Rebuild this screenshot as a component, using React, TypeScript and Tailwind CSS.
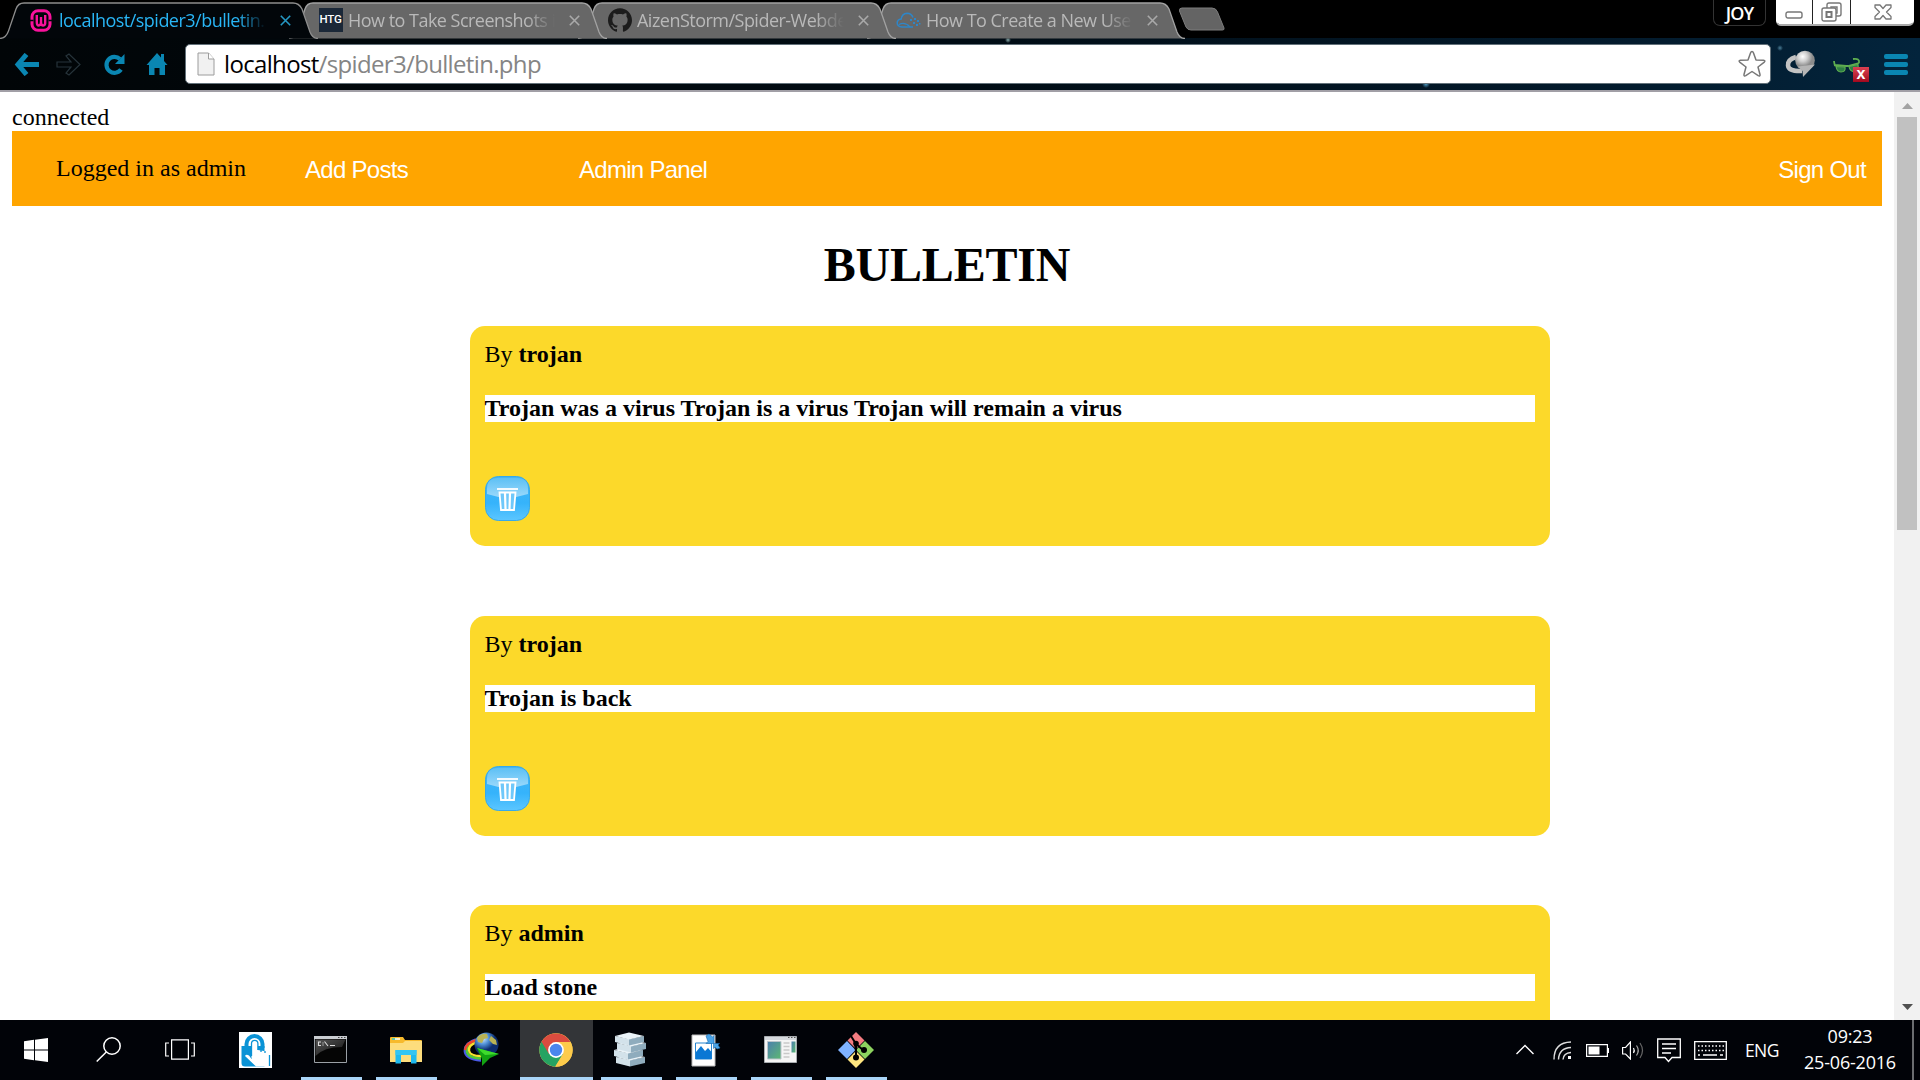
import type { ReactNode } from "react";
import { SiGithub } from "react-icons/si";

const UI = "font-['Open_Sans','Noto_Sans',sans-serif]";
const SERIF = "font-['Liberation_Serif','Times_New_Roman',serif]";
const ARIAL = "font-['Liberation_Sans',Arial,sans-serif]";

/* ---------- tab strip ---------- */

function WampIcon() {
  return (
    <svg className="mr-[2px]" width="22" height="23" viewBox="0 0 22 23" fill="none" stroke="#f8129b">
      <rect x="2" y="1.700" width="18" height="19.600" rx="6" strokeWidth="3" />
      <path d="M6.800 6v7q0 3.500 2 3.500T11 13V8v5q0 3.500 2.200 3.500t2-3.500V6" strokeWidth="2.400" />
      <path d="M0 11.500h3.500M18.500 11.500H22" stroke="#02070a" strokeWidth="1.300" />
    </svg>
  );
}

function CloudIcon() {
  return (
    <svg width="25" height="18" viewBox="0 0 25 18" fill="none" stroke="#2e86c8" strokeWidth="1.500">
      <path d="M17 16H6Q1.200 15.500 1.200 12t4-4Q6 2.500 11 2.200q4.500 0 6 4.300" />
      <path d="M3 13.500q6-3 11 2.500" strokeWidth="1.200" />
      <g fill="#2e86c8" stroke="none">
        <rect x="14" y="8" width="2" height="2" />
        <rect x="18" y="7" width="2" height="2" />
        <rect x="17" y="11" width="2" height="2" />
        <rect x="21" y="9" width="2" height="2" />
        <rect x="20" y="13" width="2" height="2" />
        <rect x="23" y="12" width="1.500" height="1.500" />
      </g>
    </svg>
  );
}

function HtgIcon() {
  return (
    <span className="flex h-6 w-6 items-center justify-center bg-[#1b2838] font-['Roboto',sans-serif] text-[11.5px] leading-none font-medium tracking-[-0.2px] text-white">
      HTG
    </span>
  );
}

function Tab({ active, icon, title, layer }: { active?: boolean; icon: ReactNode; title: string; layer: string }) {
  return (
    <div className={`relative h-[39px] w-[289px] shrink-0 ${layer}`}>
      <svg className="absolute top-0 left-0" width="320" height="39" viewBox="0 0 320 39" fill="none">
        <path
          d="M0 38.500Q6 38 8.500 31L16 9Q18 3 24 3H293Q299 3 302 9L310 32Q312.500 38.500 318 38.500"
          fill={active ? "#02060a" : "#676767"}
          stroke={active ? "#8d8d8d" : "#a2a2a2"}
          strokeWidth="1.300"
        />
      </svg>
      <div className="relative flex h-full items-center pt-[1px] pl-[29px]">
        <span className="flex w-[25px] shrink-0 items-center justify-center">{icon}</span>
        <span
          className={`ml-[5px] w-[207px] shrink-0 text-[18px] tracking-[-0.52px] whitespace-nowrap [mask-image:linear-gradient(to_right,black_86%,transparent)] ${UI} ${
            active ? "text-[#29b6f6]" : "text-[#b9b9b9]"
          }`}
        >
          {title}
        </span>
        <svg className="ml-[14px] shrink-0" width="11" height="11" viewBox="0 0 11 11" stroke={active ? "#2598c4" : "#a9a9a9"} strokeWidth="1.600">
          <path d="M.8.800l9.400 9.400M10.200.800L.8 10.200" />
        </svg>
      </div>
    </div>
  );
}

function WindowControls() {
  return (
    <div className="ml-auto flex h-[27px] items-start pr-[6px]">
      <div className={`mr-[10px] flex h-[26px] w-[53px] items-center justify-center rounded-b-[7px] border border-t-0 border-[#333] bg-black text-[18px] leading-none font-semibold tracking-[-0.9px] text-white ${UI}`}>
        <span className="pt-[1px]">JOY</span>
      </div>
      <div className="flex h-[26px] gap-[1px] overflow-hidden rounded-b-[5px] border-b-2 border-[#aaa] bg-[#222]">
        <span className="flex w-[36px] justify-center bg-white pt-[11px]">
          <svg width="18" height="8" viewBox="0 0 18 8" fill="none" stroke="#777" strokeWidth="1.400">
            <rect x="1" y="1" width="16" height="6" rx="2" />
          </svg>
        </span>
        <span className="flex w-[37px] justify-center bg-white pt-[2px]">
          <svg width="21" height="20" viewBox="0 0 21 20" fill="none" stroke="#777" strokeWidth="1.400">
            <path d="M6 6V3q0-2 2-2h10q2 0 2 2v9q0 2-2 2h-3" />
            <rect x="1" y="6" width="14" height="13" rx="2" />
            <rect x="5.500" y="10" width="5" height="5" strokeWidth="2" />
            <path d="M10 6V5h6v6h-1" />
          </svg>
        </span>
        <span className="flex w-[63px] justify-center bg-white pt-[4px]">
          <svg width="18" height="16" viewBox="0 0 18 16" fill="none" stroke="#777" strokeWidth="1.300" strokeLinejoin="round">
            <path d="M1 1h5l3 3.500L12 1h5v2.500L12.500 8 17 12.500V15h-5l-3-3.500L6 15H1v-2.500L5.500 8 1 3.500Z" />
          </svg>
        </span>
      </div>
    </div>
  );
}

function TabStrip() {
  return (
    <div className="relative z-10 flex h-[38px] items-start bg-black">
      <Tab active layer="z-40" icon={<WampIcon />} title="localhost/spider3/bulletin." />
      <Tab layer="z-30" icon={<HtgIcon />} title="How to Take Screenshots i" />
      <Tab layer="z-20" icon={<SiGithub size={24} color="#1c1c1c" />} title="AizenStorm/Spider-Webde" />
      <Tab layer="z-10" icon={<CloudIcon />} title="How To Create a New Use" />
      <svg className="mt-[7px] ml-[22px]" width="48" height="24" viewBox="0 0 48 24">
        <path d="M4 1H34Q38 1 39.500 5L46 21Q46.500 23 44.500 23H13Q9.500 23 8 20L1.500 4Q1 1 4 1Z" fill="#646464" stroke="#7d7d7d" />
      </svg>
      <WindowControls />
    </div>
  );
}

/* ---------- toolbar ---------- */

function Toolbar() {
  return (
    <div className="flex h-[54px] items-center border-b-2 border-[#a19fa6] pl-[14px] [background-image:radial-gradient(circle_at_1426px_46px,#4f9cc4_0,transparent_4px),radial-gradient(circle_at_1780px_10px,#4a7c95_0,transparent_3px),radial-gradient(circle_at_1008px_2px,#8aa_0,transparent_3px),linear-gradient(to_right,#010507,#010c14_50%,#031b2d_85%,#03243c)]">
      <svg width="25" height="23" viewBox="0 0 25 23" fill="none" stroke="#0a86b2" strokeWidth="5">
        <path d="M12.500 1.500L4 11.500l8.500 10M4.500 11.500H25" />
      </svg>
      <svg className="ml-[17px]" width="26" height="23" viewBox="0 0 26 23" fill="none" stroke="#26333a" strokeWidth="1.200">
        <path d="M1 9h14L10 3l3-2 11 10.500L13 22l-3-2 5-6H1Z" />
      </svg>
      <svg className="ml-[21px]" width="23" height="23" viewBox="0 0 23 23">
        <path d="M18 16.500A8 8 0 1 1 17 6" fill="none" stroke="#0a86b2" strokeWidth="4.200" />
        <path d="M21.500 1v10H12Z" fill="#0a86b2" />
      </svg>
      <svg className="ml-[20px]" width="22" height="24" viewBox="0 0 22 24" fill="#0a86b2">
        <path d="M11 1l4 4.500V2h3v7l3.500 4H19v10h-5.500v-7h-5v7H3V13H.5Z" />
      </svg>
      <div className="ml-[17px] flex h-[40px] w-[1586px] items-center rounded-[5px] border border-[#63717a] bg-white pr-[4px] pl-[11px]">
        <svg width="18" height="24" viewBox="0 0 18 24" stroke="#9c9c9c">
          <path d="M1 1h10.500L17 7v16H1Z" fill="#f1f1f1" />
          <path d="M11.500 1v6H17" fill="#fff" />
        </svg>
        <span className={`ml-[9px] text-[24px] leading-[30px] tracking-[-0.66px] text-[#858585] ${UI}`}>
          <span className="text-black">localhost</span>/spider3/bulletin.php
        </span>
        <svg className="ml-auto" width="28" height="28" viewBox="0 0 28 28" fill="#fff" stroke="#777" strokeWidth="1.500" strokeLinejoin="round">
          <path d="M14 1.500q1 0 1.500 1.500l2.500 7 7.500.200q2.500.300.500 2.200L20 17l2 7.500q.300 2.300-1.800 1.200L14 21.500l-6.200 4.200Q5.700 26.800 6 24.500L8 17l-6-4.600q-2-1.900.500-2.200L10 10l2.500-7Q13 1.500 14 1.500Z" />
        </svg>
      </div>
      <svg className="ml-[14px]" width="32" height="30" viewBox="0 0 32 30">
        <defs>
          <radialGradient id="grayGlobe" cx="38%" cy="30%">
            <stop offset="0" stopColor="#fff" />
            <stop offset=".5" stopColor="#cfcfcf" />
            <stop offset="1" stopColor="#8c8c8c" />
          </radialGradient>
        </defs>
        <path d="M11 8Q2.500 10.500 3 16.500T17 22" fill="none" stroke="#c3c3c3" strokeWidth="4.500" />
        <circle cx="20" cy="11.500" r="9.800" fill="url(#grayGlobe)" />
        <path d="M13 17.500l17-2L18 28l-.500-6Z" fill="#b5b5b5" />
      </svg>
      <div className="relative ml-[16px] h-[30px] w-[36px]">
        <svg className="mt-[8px]" width="30" height="17" viewBox="0 0 30 17" fill="#2e7f45" stroke="#5fae50" strokeWidth="1.200">
          <path d="M2 9Q1 5 1 4M2 8l11 1 2 0 11-3M26 6Q27 1 20 2" fill="none" strokeWidth="1.800" />
          <path d="M3 9.500l9 .500q1 5-4 5-4 0-5-5.500ZM16 9.500l9-2q1 6-3 7-5 .500-6-5Z" />
        </svg>
        <span className={`absolute top-[18px] left-[20px] flex h-[15px] w-[16px] items-center justify-center bg-linear-to-b from-[#dc4052] to-[#a3061e] pb-[2px] text-[16px] leading-none font-bold text-white ${ARIAL}`}>
          x
        </span>
      </div>
      <div className="ml-[15px] flex flex-col gap-[3px]">
        <span className="h-[5px] w-[24px] rounded-[2px] bg-[#0a86b2]" />
        <span className="h-[5px] w-[24px] rounded-[2px] bg-[#0a86b2]" />
        <span className="h-[5px] w-[24px] rounded-[2px] bg-[#0a86b2]" />
      </div>
    </div>
  );
}

/* ---------- page ---------- */

function TrashButton() {
  return (
    <svg className="mt-[54px] block" width="45" height="45" viewBox="0 0 45 45">
      <defs>
        <linearGradient id="trashBase" x1="0" y1="0" x2="0" y2="1">
          <stop offset="0" stopColor="#45b5f4" />
          <stop offset=".6" stopColor="#35b3fb" />
          <stop offset="1" stopColor="#5cc6ff" />
        </linearGradient>
        <linearGradient id="trashGloss" x1="0" y1="0" x2="0" y2="1">
          <stop offset="0" stopColor="#5dc0f5" />
          <stop offset="1" stopColor="#9bd9fb" />
        </linearGradient>
      </defs>
      <rect x=".5" y=".5" width="44" height="44" rx="13" fill="url(#trashBase)" stroke="#36a9ea" />
      <path d="M2 18V13Q2 2 13 2H32Q43 2 43 13v5Q22 25 2 18Z" fill="url(#trashGloss)" />
      <path d="M12 13h21" stroke="#fff" strokeWidth="1.800" />
      <path d="M14.500 16.500h16l-1.500 17.500H16Z" fill="#6fc8fa" stroke="#fff" strokeWidth="1.800" />
      <path d="M20 17l.500 16M25 17l-.500 16" stroke="#fff" strokeWidth="2.200" />
    </svg>
  );
}

function Post({ author, text }: { author: string; text: string }) {
  return (
    <article className="mb-[69.5px] ml-[457.5px] h-[220px] w-[1080px] shrink-0 rounded-[15px] bg-[#fcd92a] p-[15px]">
      <p className="leading-[27px]">
        By <b>{author}</b>
      </p>
      <p className="mt-[27px] bg-white leading-[27px] font-bold">{text}</p>
      <TrashButton />
    </article>
  );
}

const posts = [
  { author: "trojan", text: "Trojan was a virus Trojan is a virus Trojan will remain a virus" },
  { author: "trojan", text: "Trojan is back" },
  { author: "admin", text: "Load stone" },
];

function Page() {
  return (
    <div className="flex h-[928px] overflow-hidden bg-white">
      <main className={`flex flex-1 flex-col overflow-hidden pt-[12px] pr-[12px] pl-[12px] text-[24px] text-black ${SERIF}`}>
        <p className="shrink-0 leading-[27px]">connected</p>
        <nav className="flex h-[75px] shrink-0 items-center bg-[#ffa500] pr-[16px] pl-[44px]">
          <span className="w-[249px] pb-[2px]">Logged in as admin</span>
          <span className={`w-[274px] pt-[2px] text-[24px] tracking-[-0.72px] text-white ${ARIAL}`}>Add Posts</span>
          <span className={`pt-[2px] text-[24px] tracking-[-0.72px] text-white ${ARIAL}`}>Admin Panel</span>
          <span className={`ml-auto pt-[2px] text-[24px] tracking-[-0.7px] text-white ${ARIAL}`}>Sign Out</span>
        </nav>
        <h1 className="mt-[31px] mb-[33px] shrink-0 text-center text-[48px] leading-[56px] font-bold tracking-[-0.2px]">BULLETIN</h1>
        {posts.map((p) => (
          <Post key={p.text} {...p} />
        ))}
      </main>
      <div className="flex w-[26px] flex-col items-center bg-[#f1f1f1]">
        <svg className="my-[11px] shrink-0" width="11" height="6" viewBox="0 0 11 6">
          <path d="M0 6L5.500 0 11 6Z" fill="#a3a3a3" />
        </svg>
        <div className="mt-[-3px] h-[413px] w-[20px] shrink-0 bg-[#c1c1c1]" />
        <svg className="mt-auto mb-[10px] shrink-0" width="11" height="6" viewBox="0 0 11 6">
          <path d="M0 0h11L5.500 6Z" fill="#505050" />
        </svg>
      </div>
    </div>
  );
}

/* ---------- taskbar ---------- */

function Slot({ children, running, focused }: { children: ReactNode; running?: boolean; focused?: boolean }) {
  return (
    <div className="flex h-full w-[75px] flex-col items-center">
      <div className={`flex h-[57px] w-[73px] items-center justify-center pt-[2px] pr-[2px] ${focused ? "bg-[#333538]" : ""}`}>{children}</div>
      {running && <div className={`h-[3px] bg-[#a9d5f8] ${focused ? "w-[73px]" : "w-[61px]"}`} />}
    </div>
  );
}

function TouchIcon() {
  return (
    <svg width="33" height="36" viewBox="0 0 33 36">
      <path d="M0 0h33v36H0Z" fill="#fff" />
      <path d="M2.500 14h23v20.500H6Q2.500 34.500 2.500 31Z" fill="#0a93d6" />
      <path d="M7.500 14V12a8 8 0 0 1 16 0v4" fill="none" stroke="#0a93d6" strokeWidth="4" />
      <path d="M12.500 27V11.500a3.200 3.200 0 0 1 6.400 0V18l9 1.500q3 .500 3 3.500v11.500H17L6 24q1-2 4-.500Z" fill="#fff" />
      <path d="M12.500 24V11.500a3.200 3.200 0 0 1 6.400 0V18M22 20v-2M26 21v-2M30.500 34V23" fill="none" stroke="#0a93d6" strokeWidth="1.300" />
    </svg>
  );
}

function CmdIcon() {
  return (
    <svg width="33" height="27" viewBox="0 0 33 27">
      <defs>
        <linearGradient id="cmdShine" x1="0" y1="0" x2="1" y2="1">
          <stop offset="0" stopColor="#555" />
          <stop offset="1" stopColor="#111" />
        </linearGradient>
      </defs>
      <path d="M.5.500h32v26H.5Z" fill="#050505" stroke="#9aa0a6" />
      <path d="M0 0h33v3H0Z" fill="#c9cdd2" />
      <path d="M1.500 3.500h30L28 11Q10 11 1.500 20Z" fill="url(#cmdShine)" />
      <path d="M24 1.500h1.500M27 1.500h1.500M30 1.500h1.500" stroke="#444" strokeWidth="1.200" />
      <path d="M7 6H4.500V9.500H7M9 6.500v1M9 8.500v1M10.500 5.500l3.500 4.500M16 9.500h5" fill="none" stroke="#ddd" strokeWidth="1.100" />
    </svg>
  );
}

function FolderIcon() {
  return (
    <svg width="32" height="28" viewBox="0 0 32 28">
      <path d="M0 2Q0 1 1 1h12l2 3h16q1 0 1 1v20H0Z" fill="#f7ba2c" />
      <path d="M2 3h5" stroke="#3cc" strokeWidth="1.500" />
      <path d="M5 3h5" stroke="#fff" strokeWidth="1.500" />
      <path d="M0 7h13l2-2h17v21H0Z" fill="#fddd7c" />
      <path d="M5.500 27.500V14h21v13.500h-5.500V19h-10v8.500Z" fill="#1fb9ee" />
      <path d="M5.500 19h21v-5h-21Z" fill="#33c5f3" />
    </svg>
  );
}

function IdmIcon() {
  return (
    <svg width="36" height="36" viewBox="0 0 36 36">
      <defs>
        <radialGradient id="idmGlobe" cx="35%" cy="25%">
          <stop offset="0" stopColor="#d5ecff" />
          <stop offset=".5" stopColor="#4f8fd6" />
          <stop offset="1" stopColor="#0b2c6e" />
        </radialGradient>
      </defs>
      <g fill="none" strokeWidth="2.400">
        <path d="M13 7.500Q1.500 11 1.800 19t16.200 9.500" stroke="#4a5ae8" />
        <path d="M13 8.500Q3 12 3.800 19t14.200 7.500" stroke="#4ec83a" />
        <path d="M13 10.500Q5.500 13 6 18.500t12 5.500" stroke="#f7e12d" />
        <path d="M14 8Q3 10.500 2 18" stroke="#f0452b" />
      </g>
      <circle cx="23.500" cy="12.500" r="12" fill="url(#idmGlobe)" />
      <path d="M14 6q4-5 10-4l1 4-4 1-2 4-4-1ZM28 4l5 4 1 5-4-1-4-4Z" fill="#b9b354" />
      <path d="M14 16l22 6-9 4-8 8 0-7Z" fill="#12a312" />
      <path d="M14 16l22 6-14 1Z" fill="#3edb2c" />
    </svg>
  );
}

function ChromeIcon() {
  return (
    <svg width="34" height="34" viewBox="0 0 34 34">
      <circle cx="17" cy="17" r="16.700" fill="#fdcb4b" />
      <path d="M17 17L2.500 8.700A16.700 16.700 0 0 0 16 33.700L24 21Z" fill="#26a362" />
      <path d="M2.500 8.700A16.700 16.700 0 0 1 31.500 9H17L10 21Z" fill="#db4c3f" />
      <path d="M17 9h14.500A16.700 16.700 0 0 1 16.500 33.700L24 21Z" fill="#fdcb4b" />
      <circle cx="17" cy="17" r="7.900" fill="#fff" />
      <circle cx="17" cy="17" r="6.200" fill="#4a86ee" />
    </svg>
  );
}

function StackIcon() {
  const blocks = [
    { y: 25, dx: 2 },
    { y: 18, dx: 0 },
    { y: 11, dx: 3 },
    { y: 4, dx: 1 },
  ];
  return (
    <svg width="33" height="36" viewBox="0 0 33 36">
      {blocks.map((b) => (
        <g key={b.y} transform={`translate(${b.dx} ${b.y - 2})`}>
          <path d="M0 2v6l14 3.500V5Z" fill="#d3e2ea" />
          <path d="M14 5v6.500L29 8V2Z" fill="#8facbd" />
          <path d="M0 2L14-1.500 29 2 14 5.500Z" fill="#eaf3f8" />
        </g>
      ))}
    </svg>
  );
}

function PictureIcon() {
  return (
    <svg width="30" height="34" viewBox="0 0 30 34">
      <path d="M1 2h23v31H1Z" fill="#fff" stroke="#bbb" />
      <path d="M4.500 10h16v16h-16Z" fill="#fff" stroke="#2585d0" />
      <path d="M5 26v-7l5-6 4 5 3-3 3.500 4v7Z" fill="#0a78d4" />
      <g fill="#4aa3e6" stroke="#1769b0" strokeWidth=".6">
        <path d="M15 3l3-2 3.500 3 1.500-1.500v8h-8l2-2Z" />
        <path d="M29 15l-3 1-2-2-1.500 1.500v-5h6l-1.500 1.500Z" />
      </g>
    </svg>
  );
}

function WindowIcon() {
  return (
    <svg width="33" height="27" viewBox="0 0 33 27">
      <defs>
        <linearGradient id="winPane" x1="0" y1="0" x2="1" y2="1">
          <stop offset="0" stopColor="#4c7fae" />
          <stop offset="1" stopColor="#5cb872" />
        </linearGradient>
      </defs>
      <path d="M.5.500h32v26H.5Z" fill="#f5f5f5" stroke="#a9adb1" />
      <path d="M1 1h31v3H1Z" fill="#d5d9dd" />
      <path d="M24 1.500h1.500M27 1.500h1.500M30 1.500h1.500" stroke="#555" />
      <path d="M3.500 5.500h13.500v17.500H3.500Z" fill="url(#winPane)" stroke="#bcc5cb" />
      <path d="M19.500 7h6M19.500 10.500h6M19.500 14h6M19.500 17.500h6M19.500 21h6" stroke="#c9c9c9" strokeWidth="1.500" />
      <path d="M27.500 5.500h4v11h-4Z" fill="url(#winPane)" />
    </svg>
  );
}

function GitIcon() {
  return (
    <svg width="36" height="36" viewBox="0 0 36 36">
      <path d="M18 0l8.500 8.500-8.500 8.500-8.500-8.500Z" fill="#f47c81" />
      <path d="M9 9l8.500 9L9 27 0 18Z" fill="#80b3ff" />
      <path d="M27 9l9 9-9 9-9-9Z" fill="#8dd35f" />
      <path d="M18 19l8.500 8.500L18 36l-8.500-8.500Z" fill="#ffe680" />
      <path d="M13 4l5 8v13M18 12l7 6M18 19l-1-7" fill="none" stroke="#000" strokeWidth="2" />
      <circle cx="18" cy="11.500" r="2.800" />
      <circle cx="18" cy="25.500" r="3" />
      <circle cx="26" cy="18" r="3" />
    </svg>
  );
}

function Tray() {
  return (
    <div className={`ml-auto flex items-center text-white ${UI}`}>
      <svg className="mb-[2px]" width="18" height="11" viewBox="0 0 18 11" fill="none" stroke="#fff" strokeWidth="1.400">
        <path d="M.5 10L9 1.500 17.500 10" />
      </svg>
      <svg className="ml-[19px]" width="19" height="19" viewBox="0 0 19 19" fill="none" stroke="#ddd" strokeWidth="1.400">
        <path d="M1 18.500Q1 1.500 18 1M5.500 18.500Q6 7 18 6.500M10 18.500Q10.500 12 18 11.500" />
        <path d="M15 15h3v3h-3Z" fill="#fff" stroke="none" />
      </svg>
      <svg className="ml-[14px]" width="23" height="13" viewBox="0 0 23 13" fill="none" stroke="#fff" strokeWidth="1.200">
        <path d="M.6.600h20.800v11.800H.6ZM22.500 4v5" />
        <path d="M2.500 2.500h11v8h-11Z" fill="#fff" stroke="none" />
      </svg>
      <svg className="ml-[13px]" width="22" height="19" viewBox="0 0 22 19" fill="none" stroke="#fff" strokeWidth="1.200">
        <path d="M.6 6.500h3L8.400 1v17L3.600 13H.6Z" />
        <path d="M11.500 7q1.500 2.500 0 5" />
        <path d="M14.500 4.500q3.500 5 0 10" stroke="#aaa" />
        <path d="M18 2q5 7.500 0 15" stroke="#666" />
      </svg>
      <svg className="ml-[13px]" width="24" height="25" viewBox="0 0 24 25" fill="none" stroke="#fff" strokeWidth="1.300">
        <path d="M.7 1h22.600v18.500H15L11.500 23.500 8 19.500H.7Z" />
        <path d="M5 6h14M5 10.500h14M5 15h9" />
      </svg>
      <svg className="ml-[13px]" width="33" height="19" viewBox="0 0 33 19" fill="none" stroke="#fff" strokeWidth="1.300">
        <path d="M.7.700h31.600v17.600H.7Z" />
        <path d="M4 5h26M4 9.500h26" strokeDasharray="1.500 2" />
        <path d="M4 14h2M9 14h14M26 14h3" />
      </svg>
      <span className="ml-[18px] w-[34px] text-[17.5px] tracking-[-0.6px]">ENG</span>
      <div className="ml-[21px] flex w-[100px] flex-col items-center pb-[2px] text-[18px] leading-[26px] tracking-[-0.2px] whitespace-nowrap">
        <span>09:23</span>
        <span>25-06-2016</span>
      </div>
      <span className="ml-[12px] h-[60px] w-[8px] border-l-2 border-[#6a6d70]" />
    </div>
  );
}

function Taskbar() {
  return (
    <footer className="flex h-[60px] items-center bg-[#010308]">
      <div className="flex w-[72px] justify-center">
        <svg width="24" height="24" viewBox="0 0 24 24" fill="#fff">
          <path d="M0 3.200l10-1.400V11.500H0ZM11 1.700L24 0v11.500H11ZM0 12.500h10v9.700L0 20.800ZM11 12.500h13V24l-13-1.700Z" />
        </svg>
      </div>
      <div className="flex w-[72px] justify-center pb-[1px]">
        <svg width="25" height="25" viewBox="0 0 25 25" fill="none" stroke="#fff" strokeWidth="1.500">
          <circle cx="16" cy="9" r="8.200" />
          <path d="M10.300 15L.7 24.500" />
        </svg>
      </div>
      <div className="mr-[3px] flex w-[72px] justify-center pb-[1px]">
        <svg width="30" height="21" viewBox="0 0 30 21" fill="none" stroke="#fff" strokeWidth="1.200">
          <path d="M6.600.800h16.800v19.400H6.600ZM4 4H.7v13H4M26 4h3.300v13H26" />
        </svg>
      </div>
      <Slot><TouchIcon /></Slot>
      <Slot running><CmdIcon /></Slot>
      <Slot running><FolderIcon /></Slot>
      <Slot><IdmIcon /></Slot>
      <Slot running focused><ChromeIcon /></Slot>
      <Slot running><StackIcon /></Slot>
      <Slot running><PictureIcon /></Slot>
      <Slot running><WindowIcon /></Slot>
      <Slot running><GitIcon /></Slot>
      <Tray />
    </footer>
  );
}

export default function App() {
  return (
    <div className="flex h-[1080px] w-[1920px] flex-col overflow-hidden bg-white">
      <TabStrip />
      <Toolbar />
      <Page />
      <Taskbar />
    </div>
  );
}
